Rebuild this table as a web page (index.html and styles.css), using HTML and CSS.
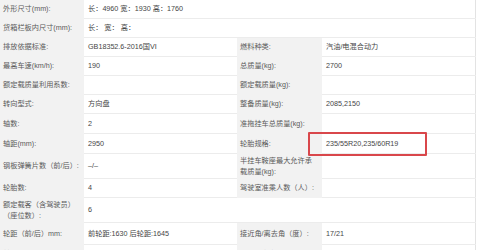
FILE: index.html
```html
<!DOCTYPE html>
<html lang="zh-CN">
<head>
<meta charset="utf-8">
<title>参数表</title>
<link rel="stylesheet" href="styles.css">
</head>
<body>
<div class="sheet">
  <table class="spec">
    <colgroup>
      <col class="c-l1"><col class="c-v1"><col class="c-l2"><col class="c-v2">
    </colgroup>
    <tbody>
      <tr class="r h18"><td class="lab">外形尺寸(mm):</td><td class="val" colspan="3">长：4960 宽：1930 高：1760</td></tr>
      <tr class="r"><td class="lab">货箱栏板内尺寸(mm):</td><td class="val" colspan="3">长： 宽： 高：</td></tr>
      <tr class="r"><td class="lab">排放依据标准:</td><td class="val">GB18352.6-2016国VI</td><td class="lab">燃料种类:</td><td class="val">汽油/电混合动力</td></tr>
      <tr class="r"><td class="lab">最高车速(km/h):</td><td class="val">190</td><td class="lab">总质量(kg):</td><td class="val">2700</td></tr>
      <tr class="r"><td class="lab">额定载质量利用系数:</td><td class="val"></td><td class="lab">额定载质量(kg):</td><td class="val"></td></tr>
      <tr class="r"><td class="lab">转向型式:</td><td class="val">方向盘</td><td class="lab">整备质量(kg):</td><td class="val">2085,2150</td></tr>
      <tr class="r h20"><td class="lab">轴数:</td><td class="val">2</td><td class="lab">准拖挂车总质量(kg):</td><td class="val"></td></tr>
      <tr class="r h20"><td class="lab">轴距(mm):</td><td class="val">2950</td><td class="lab">轮胎规格:</td><td class="val">235/55R20,235/60R19</td></tr>
      <tr class="r h25"><td class="lab">钢板弹簧片数（前/后）:</td><td class="val">–/–</td><td class="lab">半挂车鞍座最大允许承载质量(kg):</td><td class="val"></td></tr>
      <tr class="r"><td class="lab">轮胎数:</td><td class="val">4</td><td class="lab">驾驶室准乘人数（人）:</td><td class="val"></td></tr>
      <tr class="r h25"><td class="lab">额定载客（含驾驶员）（座位数）:</td><td class="val" colspan="3">6</td></tr>
      <tr class="r h22"><td class="lab">轮距（前/后）mm:</td><td class="val">前轮距:1630 后轮距:1645</td><td class="lab">接近角/离去角（度）:</td><td class="val">17/21</td></tr>
      <tr class="r"><td class="lab">前悬/后悬(mm):</td><td class="val">1007/1093</td><td class="lab">最小转弯直径(m):</td><td class="val"></td></tr>
    </tbody>
  </table>
  <div class="mark"></div>
</div>
</body>
</html>
```

FILE: styles.css
```css
html, body {
  margin: 0;
  padding: 0;
  background: #ffffff;
}

body {
  font-family: "Liberation Sans", "Noto Sans CJK SC", sans-serif;
  font-size: 7.2px;
  color: #4a4a4a;
  overflow: hidden;
}

.sheet {
  position: relative;
  width: 480px;
  height: 250px;
  overflow: hidden;
}

.spec {
  width: 475px;
  border-collapse: collapse;
  table-layout: fixed;
  border-right: 1px solid #e3e3e3;
}

.c-l1 { width: 84px; }
.c-v1 { width: 153px; }
.c-l2 { width: 85px; }
.c-v2 { width: 153px; }

.spec td {
  vertical-align: middle;
  line-height: 11px;
  border-bottom: 1px solid #ececec;
  padding: 0 3px 0 4px;
  word-break: break-all;
}

.r { height: 19px; }
.h18 { height: 18px; }
.h20 { height: 20px; }
.h22 { height: 22px; }
.h25 { height: 25px; }

.spec td.lab {
  background: #f2f2f2;
  color: #5a5a5a;
  padding-left: 3px;
  border-bottom-color: #f2f2f2;
}

.spec td.lab + .val {
  padding-left: 4px;
}

.spec td.val {
  background: #ffffff;
  color: #454545;
}

.mark {
  position: absolute;
  left: 308px;
  top: 132px;
  width: 115px;
  height: 20px;
  border: 2px solid #d9474b;
  border-radius: 1px;
}
```
